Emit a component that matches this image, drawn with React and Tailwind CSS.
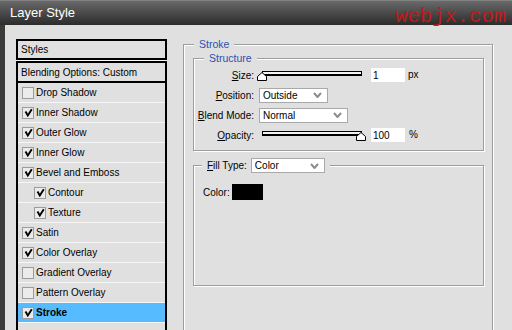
import React from 'react';

const styleItems = [
  { name: 'Drop Shadow', on: false },
  { name: 'Inner Shadow', on: true },
  { name: 'Outer Glow', on: true },
  { name: 'Inner Glow', on: true },
  { name: 'Bevel and Emboss', on: true },
  { name: 'Contour', on: true, sub: true },
  { name: 'Texture', on: true, sub: true },
  { name: 'Satin', on: true },
  { name: 'Color Overlay', on: true },
  { name: 'Gradient Overlay', on: false },
  { name: 'Pattern Overlay', on: false },
  { name: 'Stroke', on: true, active: true },
  { name: '', on: null },
];

const Checkbox = ({ checked }) => (
  <span className="w-[12px] h-[12px] border border-[#9c9c9c] bg-[#ebebeb] flex items-center justify-center shrink-0">
    {checked && (
      <svg width="9" height="9" viewBox="0 0 9 9">
        <path d="M1.5 3.5 L3.8 7.5 L7.8 1.2" fill="none" stroke="#000" strokeWidth="1.9" />
      </svg>
    )}
  </span>
);

const Chevron = () => (
  <svg width="9" height="6" viewBox="0 0 9 6">
    <path d="M1 1 L4.5 5 L8 1" fill="none" stroke="#8c8c8c" strokeWidth="2" />
  </svg>
);

const Select = ({ value, width }) => (
  <div className={`${width} h-[15px] bg-white border border-[#a9a9a9] flex items-center justify-between pl-[3px] pr-[5px]`}>
    <span>{value}</span>
    <Chevron />
  </div>
);

const Thumb = ({ className }) => (
  <svg className={`absolute top-[3px] ${className}`} width="10" height="9" viewBox="0 0 10 9">
    <path d="M0.5 8.5 L0.5 4.5 L5 0.5 L9.5 4.5 L9.5 8.5 Z" fill="#fff" stroke="#000" strokeWidth="1" />
  </svg>
);

const Slider = ({ atMax }) => (
  <div className="relative w-[108px] h-[12px] pt-[2px]">
    <div className="ml-[3px] w-[100px] h-[5px] border border-black border-b-2 bg-[#f2f2f2]" />
    {atMax ? <Thumb className="right-[1px]" /> : <Thumb className="left-[-2px]" />}
  </div>
);

const Label = ({ accel, rest }) => (
  <span className="w-[60px] text-right shrink-0">
    <span className="underline underline-offset-1">{accel}</span>
    {rest}
  </span>
);

const etched = 'border border-[#9d9d9d] shadow-[1px_1px_0_#fff,inset_1px_1px_0_#fff]';

export default function App() {
  return (
    <div className="w-[512px] h-[330px] overflow-hidden bg-[#e0e0e0] font-['Liberation_Sans',Arial,sans-serif] text-[10px] text-black">
      {/* title bar */}
      <div className="h-[25px] flex items-center justify-between pl-[10px] pr-[6px] bg-gradient-to-b from-[#6a6a6a] to-[#2c2c2c] border-t border-[#808080]">
        <span className="text-white text-[13px]">Layer Style</span>
        <span className="font-['Liberation_Mono','Courier_New',monospace] text-[20.5px] leading-none text-[#c41818] mt-[8px]">webjx.com</span>
      </div>

      <div className="flex h-[305px]">
        <div className="w-[5px] bg-[#3a3a3a]" />

        {/* styles list */}
        <div className="ml-[11px] mt-[14px] w-[151px] flex flex-col overflow-hidden">
          <div className="shrink-0 h-[21px] border-2 border-black flex items-center pl-[3px]">Styles</div>
          <div className="shrink-0 h-[1px] bg-[#f6f6f6]" />
          <div className="shrink-0 h-[22px] border-2 border-black flex items-center pl-[3px]">Blending Options: Custom</div>
          <div className="flex-1 shrink-0 border-x-2 border-black">
            {styleItems.map((item, i) => (
              <div
                key={i}
                className={`h-[20px] flex items-center gap-[2px] border-b border-[#f6f6f6] ${item.sub ? 'pl-[16px]' : 'pl-[4px]'} ${item.active ? 'bg-[#56bbff] font-bold' : ''}`}
              >
                {item.on !== null && <Checkbox checked={item.on} />}
                <span>{item.name}</span>
              </div>
            ))}
          </div>
        </div>

        {/* stroke panel */}
        <fieldset className={`ml-[16px] mt-[12px] w-[310px] h-[300px] pl-[9px] pr-[8px] ${etched}`}>
          <legend className="ml-[1px] px-[5px] bg-[#e0e0e0] text-[10.5px] leading-[14px] text-[#2f4fae]">Stroke</legend>

          <fieldset className={`w-[291px] ${etched}`}>
            <legend className="ml-[10px] px-[5px] bg-[#e0e0e0] text-[10.5px] leading-[14px] text-[#2f4fae]">Structure</legend>
            <div className="flex flex-col pb-[5px]">
              <div className="h-[20px] flex items-center">
                <Label accel="S" rest="ize:" />
                <div className="ml-[5px]"><Slider /></div>
                <div className="ml-[4px] w-[34px] h-[14px] bg-white pl-[2px] flex items-center">1</div>
                <span className="ml-[3px] -mt-[2px]">px</span>
              </div>
              <div className="h-[20px] flex items-center">
                <Label accel="P" rest="osition:" />
                <div className="ml-[5px]"><Select value="Outside" width="w-[69px]" /></div>
              </div>
              <div className="h-[20px] flex items-center">
                <Label accel="B" rest="lend Mode:" />
                <div className="ml-[5px]"><Select value="Normal" width="w-[89px]" /></div>
              </div>
              <div className="h-[20px] flex items-center">
                <Label accel="O" rest="pacity:" />
                <div className="ml-[5px]"><Slider atMax /></div>
                <div className="ml-[4px] w-[34px] h-[14px] bg-white pl-[2px] flex items-center">100</div>
                <span className="ml-[4px] -mt-[2px]">%</span>
              </div>
            </div>
          </fieldset>

          <fieldset className={`mt-[7px] w-[291px] ${etched}`}>
            <legend className="ml-[8px] px-[5px] bg-[#e0e0e0]">
              <div className="flex items-center gap-[4px]">
                <span><span className="underline underline-offset-1">F</span>ill Type:</span>
                <Select value="Color" width="w-[74px]" />
              </div>
            </legend>
            <div className="h-[112px] pt-[11px] pl-[9px]">
              <div className="flex items-center gap-[2px]">
                <span>Color:</span>
                <div className="w-[31px] h-[16px] bg-black" />
              </div>
            </div>
          </fieldset>
        </fieldset>
      </div>
    </div>
  );
}
